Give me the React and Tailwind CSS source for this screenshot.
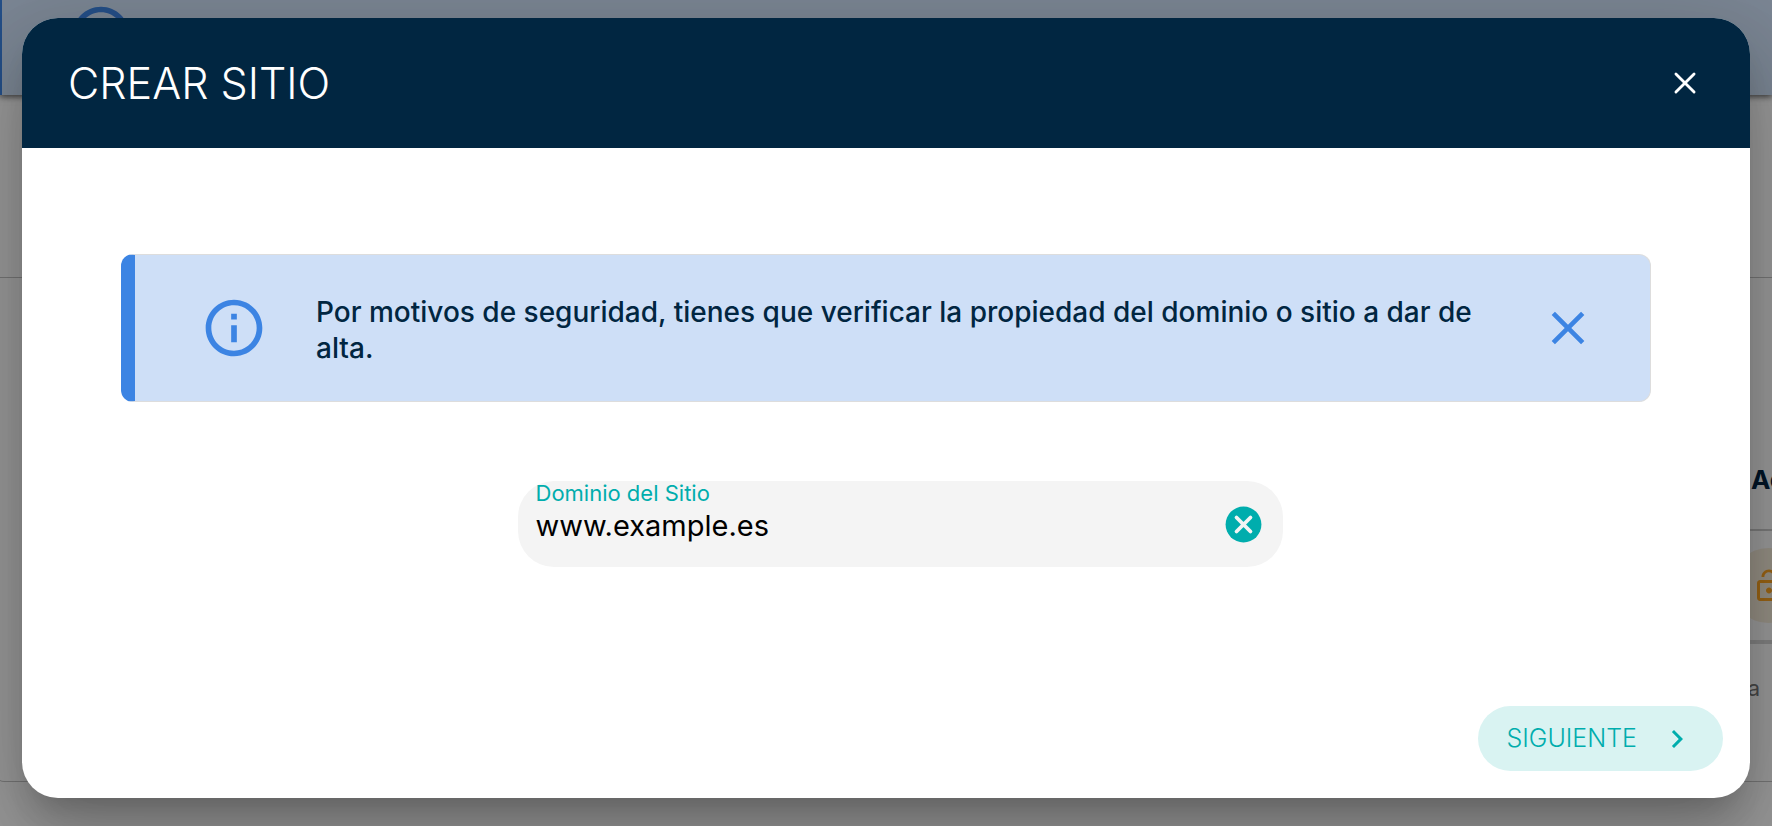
import { useState } from "react";
import { MdChevronRight, MdClose, MdInfoOutline, MdLockOpen } from "react-icons/md";

function Backdrop() {
  return (
    <div aria-hidden="true" className="absolute inset-0 isolate flex flex-col overflow-hidden bg-white">
      <div className="z-10 h-[95px] shrink-0 border-l-2 border-[#3c84e3] bg-[#cedff7] pl-[65px] shadow-[0_2px_6px_rgba(0,0,0,0.6)]">
        <MdInfoOutline className="mt-px size-[68px] text-[#3c84e3]" />
      </div>
      <div className="h-[183px] shrink-0 border-b border-[#c4c4c4]" />
      <div className="-ml-1 flex h-[504px] shrink-0 flex-col rounded-bl-lg border-b border-[#c4c4c4] pl-16">
        <div className="mt-[152px] flex h-[101px] items-center justify-end border-b-2 border-[#cccccc]">
          <span className="w-[21px] text-[26px] font-bold text-[#012641]">Acciones</span>
        </div>
        <div className="flex h-[113px] items-center justify-end border-b-4 border-[#d8d8d8]">
          <span className="-mr-[34px] flex h-[75px] w-[75px] items-center justify-center rounded-full bg-[#f9efdd]">
            <MdLockOpen className="size-9 shrink-0 text-[#ffa726]" />
          </span>
        </div>
        <div className="flex h-[88px] items-center justify-end pr-3 text-[22px] text-[#777]">Página</div>
      </div>
    </div>
  );
}

function Notice({ onClose }) {
  return (
    <div
      role="status"
      className="flex min-h-[148px] items-center rounded-xl border border-l-[14px] border-[#dddddd] border-l-[#3c84e3] bg-[#cedff7] pr-[54px] pl-[65px]"
    >
      <MdInfoOutline className="size-[68px] shrink-0 text-[#3c84e3]" />
      <p className="ml-12 flex-1 pt-1 text-[28px] leading-9 font-medium text-[#012641]">
        Por motivos de seguridad, tienes que verificar la propiedad del dominio o sitio a dar de alta.
      </p>
      <button type="button" aria-label="Cerrar aviso" onClick={onClose} className="ml-6 text-[#3c84e3]">
        <MdClose className="size-14" />
      </button>
    </div>
  );
}

function DomainField() {
  const [domain, setDomain] = useState("www.example.es");
  return (
    <div className="ml-7 flex h-[86px] w-1/2 items-center rounded-[36px] bg-[#f4f4f4] pr-[18px] pl-[18px]">
      <div className="flex min-w-0 flex-1 flex-col self-start">
        <label htmlFor="domain" className="text-[22px] leading-6 text-[#00adad]">
          Dominio del Sitio
        </label>
        <input
          id="domain"
          type="text"
          value={domain}
          onChange={(e) => setDomain(e.target.value)}
          className="h-[42px] w-full bg-transparent text-[29px] text-black outline-none"
        />
      </div>
      <button type="button" aria-label="Borrar" onClick={() => setDomain("")}>
        <svg viewBox="0 0 24 24" className="size-[43px]">
          <circle cx="12" cy="12" r="10" fill="#00adad" />
          <path d="M8.1 8.1l7.8 7.8M15.9 8.1l-7.8 7.8" stroke="#f4f4f4" strokeWidth="2.1" strokeLinecap="round" />
        </svg>
      </button>
    </div>
  );
}

export default function App() {
  const [notice, setNotice] = useState(true);
  return (
    <div className="relative min-h-screen overflow-hidden font-['Inter',sans-serif]">
      <Backdrop />
      <div className="relative flex min-h-screen flex-col bg-black/40 px-[22px] pt-[18px] pb-7">
        <div
          role="dialog"
          aria-modal="true"
          aria-labelledby="dialog-title"
          className="flex flex-1 flex-col overflow-hidden rounded-[36px] bg-white shadow-[0_22px_30px_-14px_rgba(0,0,0,0.2),0_48px_76px_6px_rgba(0,0,0,0.14),0_18px_92px_16px_rgba(0,0,0,0.12)]"
        >
          <header className="flex h-[130px] items-center justify-between bg-[#012641] pr-12 pl-[46px] text-white">
            <h1 id="dialog-title" className="text-[43px] font-light">
              CREAR SITIO
            </h1>
            <button type="button" aria-label="Cerrar">
              <svg viewBox="0 0 24 24" className="size-[34px]" stroke="currentColor" strokeWidth="2" strokeLinecap="round">
                <path d="M5.6 5.6l12.8 12.8M18.4 5.6L5.6 18.4" />
              </svg>
            </button>
          </header>
          <main className="flex flex-1 flex-col items-center px-[99px] pt-[106px]">
            <div className="mb-[79px] w-full">{notice && <Notice onClose={() => setNotice(false)} />}</div>
            <DomainField />
          </main>
          <footer className="flex justify-end px-[27px] pb-[27px]">
            <button
              type="button"
              className="flex h-[65px] items-center gap-[22px] rounded-full bg-[#d9f3f2] pr-7 pl-7 text-[25px] font-light text-[#00adad]"
            >
              SIGUIENTE
              <MdChevronRight className="size-9" />
            </button>
          </footer>
        </div>
      </div>
    </div>
  );
}
